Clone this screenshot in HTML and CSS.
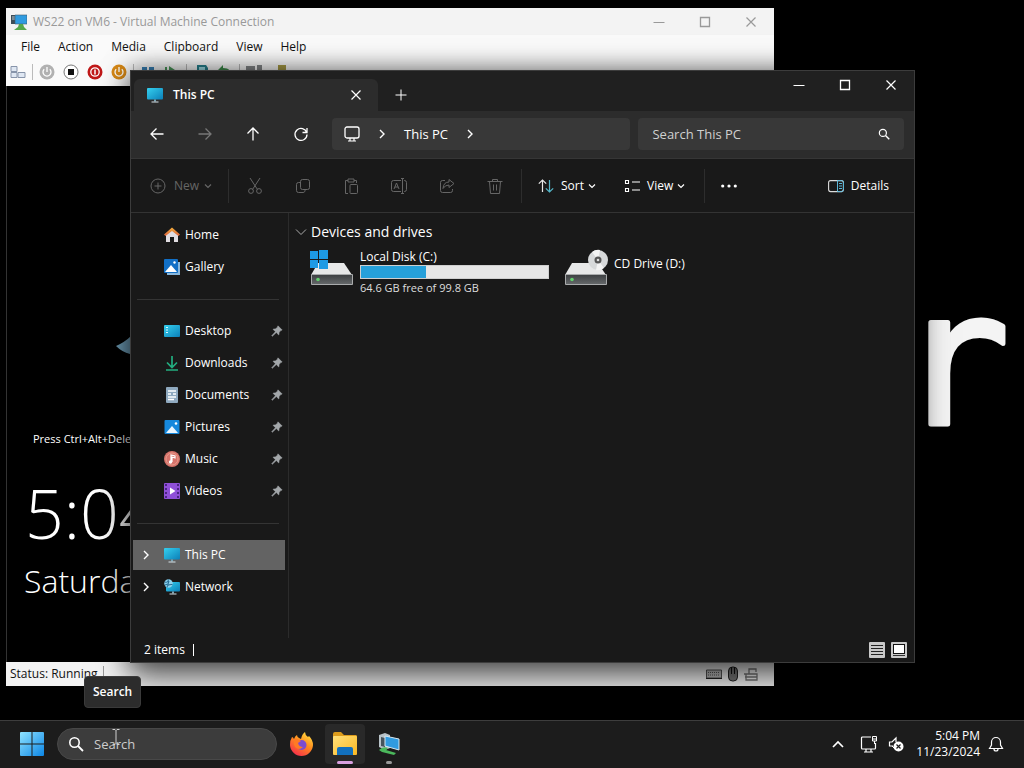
FILE: index.html
```html
<!DOCTYPE html>
<html lang="en">
<head>
<meta charset="utf-8">
<title>This PC</title>
<link rel="stylesheet" href="styles.css">
</head>
<body>
<svg class="sprite" aria-hidden="true">
  <defs>
    <linearGradient id="gBlue" x1="0" y1="0" x2="1" y2="1"><stop offset="0" stop-color="#35d0ef"/><stop offset="1" stop-color="#0b7fb8"/></linearGradient>
    <linearGradient id="gWin" x1="0" y1="0" x2="1" y2="1"><stop offset="0" stop-color="#8fe3ff"/><stop offset="1" stop-color="#0c86e6"/></linearGradient>
    <linearGradient id="gDrive" x1="0" y1="0" x2="0" y2="1"><stop offset="0" stop-color="#3c3f41"/><stop offset="1" stop-color="#66696b"/></linearGradient>
    <linearGradient id="gRoof" x1="0" y1="0" x2="0" y2="1"><stop offset="0" stop-color="#f6b13c"/><stop offset="1" stop-color="#d9603c"/></linearGradient>
    <linearGradient id="gFox" x1="0.8" y1="0" x2="0.2" y2="1"><stop offset="0" stop-color="#ffe141"/><stop offset="0.45" stop-color="#ff8a1e"/><stop offset="1" stop-color="#f5284f"/></linearGradient>
    <linearGradient id="gFolder" x1="0" y1="0" x2="1" y2="1"><stop offset="0" stop-color="#ffe07a"/><stop offset="1" stop-color="#fbb822"/></linearGradient>
  </defs>
  <symbol id="pc" viewBox="0 0 16 16"><rect x="0" y="1" width="16" height="11.5" rx="1" fill="url(#gBlue)"/><path d="M7 12.5h2v2H7z" fill="#79a6b8"/><path d="M4.5 14.5h7v1h-7z" fill="#d6e3e8"/></symbol>
  <symbol id="network" viewBox="0 0 16 16"><rect x="2" y="3" width="14" height="9.5" rx="1" fill="url(#gBlue)"/><path d="M8 12.5h2v2H8z" fill="#79a6b8"/><path d="M5.500 14.500h7v1h-7z" fill="#d6e3e8"/><circle cx="4.500" cy="4.500" r="4.200" fill="#8ed3ee"/><path d="M1 3q3 1 3.500-2.500M3 8.500Q3 5 8.500 5.500M1 6l3-1 1-3" fill="none" stroke="#2a6f96" stroke-width="1.100"/></symbol>
  <symbol id="chev" viewBox="0 0 10 10"><path d="M3 1l4 4-4 4" fill="none" stroke="currentColor" stroke-width="1.400"/></symbol>
  <symbol id="down" viewBox="0 0 8 8"><path d="M1 2.500l3 3 3-3" fill="none" stroke="currentColor" stroke-width="1.200"/></symbol>
  <symbol id="close" viewBox="0 0 12 12"><path d="M1.500 1.500l9 9m0-9l-9 9" fill="none" stroke="currentColor" stroke-width="1.200"/></symbol>
  <symbol id="max" viewBox="0 0 12 12"><path d="M1.500 1.500h9v9h-9z" fill="none" stroke="currentColor" stroke-width="1.300"/></symbol>
  <symbol id="min" viewBox="0 0 12 12"><path d="M.5 6.500h11" stroke="currentColor"/></symbol>
  <symbol id="arrow" viewBox="0 0 16 16"><path d="M14.500 8H2M7.500 2.500L2 8l5.500 5.500" fill="none" stroke="currentColor" stroke-width="1.300"/></symbol>
  <symbol id="lens" viewBox="0 0 16 16"><circle cx="6.500" cy="6.500" r="4.700" fill="none" stroke="currentColor" stroke-width="1.600"/><path d="M10 10l5 5" stroke="currentColor" stroke-width="1.800"/></symbol>
  <symbol id="pin" viewBox="0 0 12 12"><path d="M7 .8L11.200 5 9.800 5.600 8.200 7.300 7.800 10 5.300 7.600 1.300 11.300.7 10.700 4.400 6.700 2 4.200 4.700 3.800 6.400 2.200z" fill="#a3a7aa" stroke="#a3a7aa" stroke-width=".5" stroke-linejoin="round"/></symbol>
  <symbol id="power" viewBox="0 0 16 16"><circle cx="8" cy="8" r="7.500" fill="currentColor"/><path d="M5.200 5.200a4 4 0 1 0 5.600 0M8 3v5" fill="none" stroke="#fff" stroke-width="1.300"/></symbol>
  <symbol id="picture" viewBox="0 0 16 16"><rect x=".5" y="1" width="15" height="14" rx="1" fill="#1688dc"/><path d="M2 14l6-7 6 7z" fill="#eaf6ff"/><circle cx="12" cy="4.500" r="1.300" fill="#fff"/></symbol>
  <symbol id="drive" viewBox="0 0 44 24"><path d="M8 0h26l8 12H1z" fill="#e7e8e8"/><path d="M1.500 11.500h41v10h-41z" fill="url(#gDrive)" stroke="#a9abac"/><circle cx="8" cy="16.500" r="1.800" fill="#62d06d"/></symbol>
  <symbol id="vm" viewBox="0 0 16 16"><path d="M0 1h6v9H0z" fill="#3d4d57"/><path d="M1 3h4M1 5h4" stroke="#b7c9d3"/><path d="M4 1h12v9H4z" fill="#2f9be0" stroke="#3c5b70" stroke-width=".6"/><path d="M8 10h4l1 3 3 3H3l4-3z" fill="#55a84a"/></symbol>
</svg>

<main class="desktop">
  <svg class="wallpaper-word" viewBox="0 0 130 150"><text x="4" y="125">r</text></svg>

  <section class="vm-window" aria-label="Virtual Machine Connection">
    <header class="vm-title">
      <svg class="i16"><use href="#vm"/></svg>
      <span class="vm-name">WS22 on VM6 - Virtual Machine Connection</span>
      <button class="caption" aria-label="Minimize"><svg class="i12"><use href="#min"/></svg></button>
      <button class="caption" aria-label="Maximize"><svg class="i12"><use href="#max"/></svg></button>
      <button class="caption" aria-label="Close"><svg class="i12"><use href="#close"/></svg></button>
    </header>
    <nav class="vm-menu">
      <button>File</button><button>Action</button><button>Media</button><button>Clipboard</button><button>View</button><button>Help</button>
    </nav>
    <div class="vm-tools">
      <button aria-label="Ctrl+Alt+Delete"><svg class="i16" viewBox="0 0 16 16"><path d="M1 2.500h6v5H1zM1 8.500h6v5H1zM8 8.500h7v5H8z" fill="#dfe7f2" stroke="#8794aa"/></svg></button>
      <i class="vm-sep"></i>
      <button class="grey" aria-label="Start"><svg class="i16"><use href="#power"/></svg></button>
      <button aria-label="Turn off"><svg class="i16" viewBox="0 0 16 16"><circle cx="8" cy="8" r="7" fill="#fff" stroke="#777"/><path d="M5 5h6v6H5z" fill="#111"/></svg></button>
      <button aria-label="Shut down"><svg class="i16" viewBox="0 0 16 16"><circle cx="8" cy="8" r="7.500" fill="#c01818"/><circle cx="8" cy="8" r="4.200" fill="none" stroke="#fff" stroke-width="1.300"/><path d="M8 5.500v5" stroke="#fff" stroke-width="1.500"/></svg></button>
      <button class="orange" aria-label="Save"><svg class="i16"><use href="#power"/></svg></button>
      <i class="vm-sep"></i>
      <button aria-label="Pause"><svg class="i16" viewBox="0 0 16 16"><path d="M2 3h5v11H2zM9 3h5v11H9z" fill="#3a83b8"/></svg></button>
      <button aria-label="Reset"><svg class="i16" viewBox="0 0 16 16"><path d="M1 3h2v11H1zM5 2l9 6-9 6z" fill="#4c9a5c"/></svg></button>
      <i class="vm-sep"></i>
      <button aria-label="Checkpoint"><svg class="i16" viewBox="0 0 16 16"><path d="M4 1h9l2 3v10H4z" fill="#27828f"/><path d="M6 3h6v3H6z" fill="#9fe0e8"/></svg></button>
      <button aria-label="Revert"><svg class="i16" viewBox="0 0 16 16"><path d="M1 6l5-5v3c6 0 9 3 8 10-1-5-4-6-8-6v3z" fill="#3f8f4c"/></svg></button>
      <i class="vm-sep"></i>
      <button aria-label="Enhanced session"><svg class="i16" viewBox="0 0 16 16"><path d="M0 2h9v9H0zM11 1h5v13h-5z" fill="#85888a"/></svg></button>
      <button aria-label="Share"><svg class="i16" viewBox="0 0 16 16"><path d="M8 1h8v8H8z" fill="#a89b45"/><path d="M1 6h9v8H1z" fill="#777"/></svg></button>
    </div>
    <div class="vm-screen">
      <svg class="bird" viewBox="0 0 30 26"><path d="M0 10Q9 6 15 0h15v26Q18 22 14 18 6 16 0 10z" fill="#6f9fb9"/></svg>
      <p class="lock-hint">Press Ctrl+Alt+Delete</p>
      <p class="lock-time">5:04</p>
      <p class="lock-date">Saturday</p>
    </div>
    <footer class="vm-status">
      <span class="vm-state">Status: Running</span>
      <svg class="i16" viewBox="0 0 16 16"><path d="M.5 4h15v8H.5z" fill="#bbb" stroke="#555"/><path d="M2 6.500h12M2 9h12" stroke="#555" stroke-dasharray="1 1"/><path d="M0 12.500h16" stroke="#222"/></svg>
      <svg class="i16" viewBox="0 0 16 16"><rect x="3.500" y="1" width="9" height="14" rx="4" fill="#777" stroke="#222"/><path d="M6.500 1v7M9.500 1v7" stroke="#111"/></svg>
      <svg class="i16" viewBox="0 0 16 16"><path d="M2 8h11v6H2zM5 8V3h7v3M0 8h3M1 11h12" fill="none" stroke="#777" stroke-width="1.300"/></svg>
    </footer>
  </section>

  <section class="explorer" aria-label="File Explorer">
    <header class="tabs">
      <div class="tab">
        <svg class="i16"><use href="#pc"/></svg><span class="tab-name">This PC</span>
        <button aria-label="Close tab"><svg class="i12"><use href="#close"/></svg></button>
      </div>
      <button class="new-tab" aria-label="New tab"><svg class="i12" viewBox="0 0 12 12"><path d="M6 .5v11M.5 6h11" stroke="currentColor"/></svg></button>
      <div class="captions">
        <button class="caption" aria-label="Minimize"><svg class="i12"><use href="#min"/></svg></button>
        <button class="caption" aria-label="Maximize"><svg class="i12"><use href="#max"/></svg></button>
        <button class="caption" aria-label="Close"><svg class="i12"><use href="#close"/></svg></button>
      </div>
    </header>

    <div class="nav">
      <button class="nav-btn" aria-label="Back"><svg class="i16"><use href="#arrow"/></svg></button>
      <button class="nav-btn" aria-label="Forward" disabled><svg class="i16 flip"><use href="#arrow"/></svg></button>
      <button class="nav-btn" aria-label="Up"><svg class="i16 turn"><use href="#arrow"/></svg></button>
      <button class="nav-btn" aria-label="Refresh"><svg class="i16" viewBox="0 0 16 16"><path d="M13.700 6.500A6 6 0 1 0 14 8.500M14 2v4.500H9.500" fill="none" stroke="currentColor" stroke-width="1.300"/></svg></button>
      <div class="address">
        <svg class="i16" viewBox="0 0 16 16"><rect x="1" y="1" width="14" height="11" rx="2" fill="none" stroke="currentColor" stroke-width="1.300"/><path d="M6 12v3m4-3v3M4 15h8" stroke="currentColor" stroke-width="1.200"/></svg>
        <svg class="i10"><use href="#chev"/></svg>
        <button>This PC</button>
        <svg class="i10"><use href="#chev"/></svg>
      </div>
      <label class="find"><input type="text" placeholder="Search This PC" aria-label="Search This PC"><svg class="i12" viewBox="0 0 16 16"><use href="#lens"/></svg></label>
    </div>

    <div class="commands">
      <button class="cmd new" disabled><svg class="i16" viewBox="0 0 16 16"><circle cx="8" cy="8" r="7" fill="none" stroke="currentColor"/><path d="M8 4.500v7M4.500 8h7" stroke="currentColor"/></svg>New<svg class="i8"><use href="#down"/></svg></button>
      <i class="rule"></i>
      <button class="tool" aria-label="Cut" disabled><svg class="i16" viewBox="0 0 16 16"><path d="M3 0l7.500 11.500M13 0L5.500 11.500" fill="none" stroke="currentColor"/><circle cx="4" cy="13" r="2.400" fill="none" stroke="currentColor"/><circle cx="12" cy="13" r="2.400" fill="none" stroke="currentColor"/></svg></button>
      <button class="tool" aria-label="Copy" disabled><svg class="i16" viewBox="0 0 16 16"><rect x="5.500" y="1.500" width="9" height="10" rx="2" fill="none" stroke="currentColor"/><path d="M5 4.500H3.500a2 2 0 0 0-2 2v6a2 2 0 0 0 2 2H8a2 2 0 0 0 2-2.500" fill="none" stroke="currentColor"/></svg></button>
      <button class="tool" aria-label="Paste" disabled><svg class="i16" viewBox="0 0 16 16"><path d="M5 15.500H2.500v-13H5m6 0h2.500V5M5 1h6v3H5z" fill="none" stroke="currentColor"/><rect x="7" y="6.500" width="7.500" height="9" rx="1" fill="none" stroke="currentColor"/></svg></button>
      <button class="tool" aria-label="Rename" disabled><svg class="i16" viewBox="0 0 16 16"><path d="M10 2.500H2.500a2 2 0 0 0-2 2v7a2 2 0 0 0 2 2H10M13 2.500h.5a2 2 0 0 1 2 2v7a2 2 0 0 1-2 2H13M11.500 1v14M10 .5h3m-3 15h3M3 11l2.500-6L8 11M4 9h3" fill="none" stroke="currentColor"/></svg></button>
      <button class="tool" aria-label="Share" disabled><svg class="i16" viewBox="0 0 16 16"><path d="M6 2.500H3.500a2 2 0 0 0-2 2v8a2 2 0 0 0 2 2h8a2 2 0 0 0 2-2V11M10 1.500l5 4-5 4V7q-4 0-6 3.500Q4.500 4 10 4z" fill="none" stroke="currentColor"/></svg></button>
      <button class="tool" aria-label="Delete" disabled><svg class="i16" viewBox="0 0 16 16"><path d="M.5 3.500h15M5.500 3.500v-2h5v2M2.500 3.500l1 12h9l1-12M6.500 6.500v6m3-6v6" fill="none" stroke="currentColor"/></svg></button>
      <i class="rule"></i>
      <button class="cmd sort"><svg class="i16" viewBox="0 0 16 16"><path d="M4.500 14V2M.8 5.700L4.500 2l3.700 3.700" fill="none" stroke="#e8e8e8" stroke-width="1.200"/><path d="M11.500 2v12M7.800 10.300l3.700 3.700 3.700-3.700" fill="none" stroke="#55b7ca" stroke-width="1.200"/></svg>Sort<svg class="i8"><use href="#down"/></svg></button>
      <button class="cmd view"><svg class="i16" viewBox="0 0 16 16"><path d="M1.500 2.500h3v3h-3zM1.500 10.500h3v3h-3zM8 4h8M8 12h8" fill="none" stroke="currentColor" stroke-width="1.100"/></svg>View<svg class="i8"><use href="#down"/></svg></button>
      <i class="rule"></i>
      <button class="tool more" aria-label="See more"><svg class="i16" viewBox="0 0 16 16"><circle cx="1.700" cy="8" r="1.600" fill="currentColor"/><circle cx="8" cy="8" r="1.600" fill="currentColor"/><circle cx="14.300" cy="8" r="1.600" fill="currentColor"/></svg></button>
      <button class="cmd details"><svg class="i16" viewBox="0 0 16 16"><rect x=".6" y="2.600" width="14.800" height="11" rx="2" fill="none" stroke="#dcdcdc" stroke-width="1.100"/><path d="M9.500 2.600h4a2 2 0 0 1 2 2v7a2 2 0 0 1-2 2h-4zM11 5.500h3M11 8h3M11 10.500h3" fill="none" stroke="#5bb7d8"/></svg>Details</button>
    </div>

    <div class="content">
      <nav class="sidebar">
        <a href="#"><svg class="i16" viewBox="0 0 16 16"><path d="M2 7l6-5 6 5v8h-4v-5H6v5H2z" fill="#e1dde2"/><path d="M0 7.500L8 .5l8 7-1.500 1.500L8 4 1.500 9z" fill="url(#gRoof)"/></svg>Home</a>
        <a href="#"><svg class="i16" viewBox="0 0 16 16"><path d="M3 3h13v13H3z" fill="#88b7dc"/><rect width="14" height="14" rx="1" fill="#116fc6"/><path d="M1 13l6-7 6 7z" fill="#fff"/><circle cx="10.500" cy="3.500" r="1.200" fill="#fff"/></svg>Gallery</a>
        <hr>
        <a href="#"><svg class="i16" viewBox="0 0 16 16"><rect y="2" width="16" height="12" rx="1" fill="url(#gBlue)"/><path d="M2 4.500h2M2 7h2M2 9.500h2" stroke="#d8f6ff"/></svg>Desktop<svg class="i12 pin"><use href="#pin"/></svg></a>
        <a href="#"><svg class="i16" viewBox="0 0 16 16"><path d="M8 1v11M3 7.500l5 5 5-5M2 15h12" fill="none" stroke="#23ae80" stroke-width="1.700"/></svg>Downloads<svg class="i12 pin"><use href="#pin"/></svg></a>
        <a href="#"><svg class="i16" viewBox="0 0 16 16"><rect x="2" width="12" height="16" rx="1" fill="#8fa9bf"/><path d="M4 4h8M4 7h3m2 0h3M4 10h8M4 12.500h6" stroke="#fff" stroke-width="1.300"/></svg>Documents<svg class="i12 pin"><use href="#pin"/></svg></a>
        <a href="#"><svg class="i16"><use href="#picture"/></svg>Pictures<svg class="i12 pin"><use href="#pin"/></svg></a>
        <a href="#"><svg class="i16" viewBox="0 0 16 16"><circle cx="8" cy="8" r="8" fill="#d6746c"/><circle cx="8" cy="8" r="6" fill="none" stroke="#e79c8c"/><path d="M7 11V4l4 1v2L8 6v5" fill="none" stroke="#fff" stroke-width="1.200"/><circle cx="6.500" cy="11" r="1.700" fill="#fff"/></svg>Music<svg class="i12 pin"><use href="#pin"/></svg></a>
        <a href="#"><svg class="i16" viewBox="0 0 16 16"><rect width="16" height="16" rx="1" fill="#8f4fd8"/><path d="M2 1v14M14 1v14" stroke="#4b2484" stroke-width="2" stroke-dasharray="2 2"/><path d="M6 4.500l5.500 3.500L6 11.500z" fill="#fff"/></svg>Videos<svg class="i12 pin"><use href="#pin"/></svg></a>
        <hr>
        <a href="#" class="root selected"><svg class="i10"><use href="#chev"/></svg><svg class="i16"><use href="#pc"/></svg>This PC</a>
        <a href="#" class="root"><svg class="i10"><use href="#chev"/></svg><svg class="i16"><use href="#network"/></svg>Network</a>
      </nav>
      <div class="files">
        <h2><svg class="i12" viewBox="0 0 12 12"><path d="M1 3.500l5 5 5-5" fill="none" stroke="#aaa"/></svg>Devices and drives</h2>
        <div class="drives">
          <div class="drive">
            <svg class="drive-icon" viewBox="0 0 44 38"><use href="#drive" y="14" width="44" height="24"/><path d="M0 2h8v8H0zM9 1h9v9H9zM0 11h8v8H0zM9 11h9v9H9z" fill="#1d9ae4"/></svg>
            <div class="drive-info">
              <span>Local Disk (C:)</span>
              <div class="usage"><div class="used"></div></div>
              <span class="free">64.6 GB free of 99.8 GB</span>
            </div>
          </div>
          <div class="drive">
            <svg class="drive-icon" viewBox="0 0 44 38"><use href="#drive" y="14" width="44" height="24"/><circle cx="34" cy="11" r="10" fill="#d7d9da"/><path d="M34 11L28 3a10 10 0 0 1 8-2zM34 11l6 8a10 10 0 0 1-8 2z" fill="#f3f3f3"/><circle cx="34" cy="11" r="3.500" fill="#555"/><circle cx="34" cy="11" r="1.300" fill="#ddd"/></svg>
            <div class="drive-info"><span>CD Drive (D:)</span></div>
          </div>
        </div>
      </div>
    </div>

    <footer class="status">
      <span class="count">2 items</span>
      <button aria-label="Details view"><svg class="i16" viewBox="0 0 16 16"><rect width="16" height="16" rx="1" fill="#c9c9c9"/><path d="M2 3.500h12M2 6.500h12M2 9.500h12M2 12.500h12" stroke="#222"/></svg></button>
      <button aria-label="Large icons"><svg class="i16" viewBox="0 0 16 16"><rect width="16" height="16" rx="1" fill="#c9c9c9"/><rect x="2.500" y="2.500" width="11" height="9" fill="#fff" stroke="#111"/><path d="M2 13.500h12" stroke="#333"/></svg></button>
    </footer>
  </section>

  <div class="tooltip" role="tooltip">Search</div>

  <footer class="taskbar">
    <button class="start" aria-label="Start"><svg class="i24" viewBox="0 0 24 24"><path d="M0 1a1 1 0 0 1 1-1h10.500v11.500H0zM12.500 0H23a1 1 0 0 1 1 1v10.500H12.500zM0 12.500h11.500V24H1a1 1 0 0 1-1-1zM12.500 12.500H24V23a1 1 0 0 1-1 1H12.500z" fill="url(#gWin)"/></svg></button>
    <label class="task-search"><svg class="i16"><use href="#lens"/></svg><input type="text" placeholder="Search" aria-label="Search"></label>
    <button class="app" aria-label="Firefox"><svg class="i24" viewBox="0 0 24 24"><path d="M3 5q1 0 2 2 1-3 3-4 0 2 2 3l2 1q1-5 4-7 0 3 3 5l1-1q4 4 4 9A11.500 11.500 0 0 1 12.500 24 11.500 11.500 0 0 1 1 13Q1 8 3 5z" fill="url(#gFox)"/><circle cx="12.500" cy="13" r="5" fill="#7c4bd0"/><path d="M5 8q4-2 7 1l-3 2q1 4 5 4-4 4-8 0-2-3-1-7z" fill="#ff7a24"/></svg></button>
    <button class="app open" aria-label="File Explorer"><svg class="i26" viewBox="0 0 26 26"><path d="M1 5V3q0-2 2-2h6l3 3h12q1 0 1 2v3H1z" fill="#dd9c1c"/><rect x="1" y="5" width="24" height="19" rx="1" fill="url(#gFolder)"/><path d="M5 24v-6q0-2 2-2h12q2 0 2 2v6z" fill="#1270bd"/></svg><i></i></button>
    <button class="app" aria-label="Hyper-V Manager"><svg class="i24" viewBox="0 0 24 24"><path d="M2 3l6-2 5 2v13l-5 2-6-3z" fill="#b8c2c8"/><path d="M4 5l4 1v9l-4-1z" fill="#46535b"/><path d="M8 4l14 3v11L8 14z" fill="#319be0" stroke="#d8e7ee"/><path d="M2 18q4-4 9-2l-2 2 10 3-2 2-12-3z" fill="#4bb85c"/></svg><i></i></button>
    <div class="tray">
      <button aria-label="Show hidden icons"><svg class="i12" viewBox="0 0 12 12"><path d="M1 9l5-5 5 5" fill="none" stroke="currentColor" stroke-width="1.700"/></svg></button>
      <button aria-label="Network"><svg class="i18" viewBox="0 0 18 18"><path d="M11 2H2.500q-1 0-1 1v10q0 1 1 1h12q1 0 1-1V8M6 14v3m5-3v3M4 17h9" fill="none" stroke="currentColor" stroke-width="1.200"/><path d="M12.500 1.500h4V6h-4zM13 4h3M14.500 6v3" fill="none" stroke="currentColor"/></svg></button>
      <button aria-label="Volume"><svg class="i16" viewBox="0 0 16 16"><path d="M5 10H1.500V6H4l4-4v4" fill="none" stroke="currentColor" stroke-width="1.200"/><path d="M4 10l3 3" stroke="currentColor"/><circle cx="10.500" cy="10.500" r="5" fill="currentColor"/><path d="M8.500 8.500l4 4m0-4l-4 4" stroke="#1c1c1c" stroke-width="1.200"/></svg></button>
      <button class="clock"><span>5:04 PM</span><span>11/23/2024</span></button>
      <button aria-label="Notifications"><svg class="i16" viewBox="0 0 16 16"><path d="M1.500 12.500L3.500 9V6a4.500 4.500 0 0 1 9 0v3l2 3.500zM6 13q0 2 2 2t2-2" fill="none" stroke="currentColor" stroke-width="1.200"/></svg></button>
    </div>
  </footer>
  <svg class="cursor" viewBox="0 0 8 16"><path d="M.5.5h2.500l1 1 1-1h2.500M4 1.500v13M.5 15.500H3l1-1 1 1h2.500" fill="none" stroke="#d0d0d0"/></svg>
</main>
</body>
</html>
```
FILE: styles.css
```css
* { box-sizing: border-box; }
body {
  margin: 0;
  background: #000;
  color: #fff;
  font: 12px/16px "Open Sans", "Noto Sans", sans-serif;
}
button, input { font: inherit; color: inherit; background: none; border: 0; padding: 0; margin: 0; }
button { display: flex; align-items: center; justify-content: center; }
input { outline: 0; min-width: 0; }
a { color: inherit; text-decoration: none; }
p, h2 { margin: 0; font-weight: 400; }
svg { flex: none; display: block; }
.sprite { position: absolute; width: 0; height: 0; }
.i8 { width: 8px; height: 8px; }
.i10 { width: 10px; height: 10px; }
.i12 { width: 12px; height: 12px; }
.i16 { width: 16px; height: 16px; }
.i18 { width: 18px; height: 18px; }
.i24 { width: 24px; height: 24px; }
.i26 { width: 26px; height: 26px; }
.flip { transform: rotate(180deg); }
.turn { transform: rotate(90deg); }

.desktop { position: relative; height: 100vh; overflow: hidden; }
.wallpaper-word {
  position: absolute;
  right: 0;
  top: 299px;
  width: 130px;
  height: 150px;
  overflow: visible;
}
.wallpaper-word text {
  font: 186px "DejaVu Sans Mono", monospace;
  fill: #f4f4f4;
  stroke: #f4f4f4;
  stroke-width: 5px;
  stroke-linejoin: round;
}

/* Virtual machine window */
.vm-window {
  position: absolute;
  inset: 8px 250px 82px 6px;
  display: flex;
  flex-direction: column;
  background: #fafafa;
  color: #111;
}
.vm-title { display: flex; align-items: center; height: 27px; padding-left: 5px; gap: 6px; background: #f3f3f3; color: #999; }
.vm-name { flex: 1; }
.caption { width: 46px; height: 26px; }
.vm-title .caption { margin-left: -6px; }
.vm-menu { display: flex; height: 24px; gap: 18px; padding-left: 15px; align-items: center; }
.vm-tools { display: flex; height: 27px; gap: 8px; padding: 0 0 2px 4px; align-items: center; }
.vm-sep { width: 1px; height: 16px; background: #bbb; margin: 0 -2px; }
.grey { color: #b1b1b1; }
.orange { color: #d98a16; }
.vm-screen { flex: 1; background: #000; color: #fff; overflow: hidden; border-left: 1px solid #333; white-space: nowrap; }
.bird { width: 30px; height: 26px; margin: 250px 0 0 109px; }
.lock-hint { font-size: 11px; margin: 69px 0 0 26px; }
.lock-time { font-size: 68px; line-height: 96px; font-weight: 300; margin: 18px 0 0 18px; }
.lock-date { font-size: 32px; line-height: 48px; font-weight: 300; margin: -4px 0 0 17px; }
.vm-status { display: flex; align-items: center; height: 24px; gap: 3px; padding: 0 14px 0 4px; background: #f3f3f3; }
.vm-state { border-right: 1px solid #999; padding-right: 5px; margin-right: auto; }

/* File Explorer window */
.explorer {
  position: absolute;
  inset: 70px 109px 105px 130px;
  display: flex;
  flex-direction: column;
  background: #191919;
  border: 1px solid #3c3c3c;
  box-shadow: 0 16px 32px rgba(0, 0, 0, .5), 0 0 24px rgba(0, 0, 0, .55);
}
.tabs { display: flex; height: 40px; background: #202020; }
.tab { display: flex; align-items: center; width: 244px; margin: 8px 0 0 3px; padding: 0 16px 0 13px; gap: 10px; background: #2c2c2c; border-radius: 6px 6px 0 0; font-weight: 600; }
.tab-name { flex: 1; }
.new-tab { width: 45px; margin-top: 8px; }
.captions { display: flex; margin-left: auto; padding-top: 1px; }
.nav { display: flex; align-items: center; height: 48px; padding: 0 10px 2px 2px; background: #2c2c2c; border-bottom: 1px solid #363636; }
.nav-btn { width: 48px; height: 32px; }
.nav-btn:disabled { color: #777; }
.address, .find { display: flex; align-items: center; height: 32px; background: #383838; border-radius: 4px; font-size: 13px; }
.address { flex: 305 0 0; margin-left: 7px; padding: 0 12px; gap: 17px; }
.find { flex: 264 0 0; margin-left: 8px; padding: 0 14px; min-width: 0; }
.find input { flex: 1; }
.find input::placeholder { color: #d0d0d0; opacity: 1; }
.commands { display: flex; align-items: center; height: 54px; border-bottom: 1px solid #333; }
.rule { width: 1px; height: 34px; background: #2d2d2d; margin: 0 2px; }
.cmd { gap: 7px; height: 32px; justify-content: flex-start; }
.cmd .i8 { margin-left: -3px; }
.cmd:disabled, .tool:disabled { color: #666; }
.tool { width: 48px; height: 32px; }
.new { width: 95px; padding-left: 19px; gap: 8px; }
.sort { width: 86px; padding-left: 14px; }
.view { width: 92px; padding-left: 14px; }
.sort, .view { flex: none; }
.more { width: 44px; }
.details { margin-left: auto; padding-right: 25px; }

.content { display: flex; flex: 1; min-height: 0; }
.sidebar { width: 158px; padding-top: 6px; border-right: 1px solid #2b2b2b; }
.sidebar a { display: flex; align-items: center; height: 32px; gap: 5px; padding: 0 5px 0 33px; }
.sidebar .root { gap: 13px; padding-left: 10px; margin-right: 3px; }
.sidebar .root .i16 { margin-right: -8px; }
.sidebar .selected { background: #636363; border: solid #191919; border-width: 1px 0 1px 2px; padding-left: 8px; }
.pin { margin-left: auto; }
.sidebar hr { height: 1px; border: 0; background: #343434; margin: 16px 9px 15px 6px; }
.files { flex: 1; padding: 9px 6px; }
.files h2 { display: flex; align-items: center; gap: 4px; font-size: 14px; line-height: 20px; }
.drives { display: flex; gap: 15px; padding: 7px 0 0 15px; }
.drive { display: flex; width: 239px; gap: 6px; }
.drive-icon { width: 44px; height: 38px; }
.drive-info { flex: 1; display: flex; flex-direction: column; }
.drive + .drive .drive-info { padding-top: 7px; }
.usage { height: 14px; background: #e6e6e6; border: 1px solid #cfcfcf; }
.used { width: 35%; height: 100%; background: #26a0da; }
.free { color: #dedede; font-size: 11px; padding-top: 1px; }
.status { display: flex; align-items: center; height: 24px; gap: 6px; padding: 0 7px 0 13px; }
.count { border-right: 1px solid #fff; padding-right: 8px; margin-right: auto; line-height: 12px; }

.tooltip {
  position: absolute;
  left: 84px;
  bottom: 60px;
  padding: 7px 8px;
  background: #2c2c2c;
  border: 1px solid #3a3a3a;
  border-radius: 4px;
  font-weight: 600;
}

/* Taskbar */
.taskbar {
  position: absolute;
  inset: auto 0 0 0;
  display: flex;
  align-items: center;
  height: 48px;
  padding-bottom: 1px;
  background: #1c1c1c;
  border-top: 1px solid #3d3d3d;
}
.start { width: 48px; margin-left: 8px; }
.task-search { display: flex; align-items: center; width: 220px; height: 32px; margin: 0 2px 0 1px; padding: 0 10px; gap: 10px; border-radius: 16px; background: #3c3c3c; border: 1px solid #484848; }
.task-search input { flex: 1; font-size: 13px; }
.task-search input::placeholder { color: #ccc; opacity: 1; }
.app { position: relative; width: 40px; height: 40px; margin: 0 2px; border-radius: 4px; }
.app.open { background: #292929; }
.app i { position: absolute; bottom: 0; width: 6px; height: 3px; border-radius: 2px; background: #999; }
.app.open i { width: 16px; background: #d9a0e0; }
.tray { display: flex; align-items: center; margin-left: auto; padding-right: 20px; gap: 10px; }
.tray button:first-child { margin-right: 6px; }
.clock { flex-direction: column; align-items: flex-end; margin: 0 -2px 0 2px; }
.cursor { position: absolute; left: 112px; bottom: 23px; width: 8px; height: 16px; }
```
